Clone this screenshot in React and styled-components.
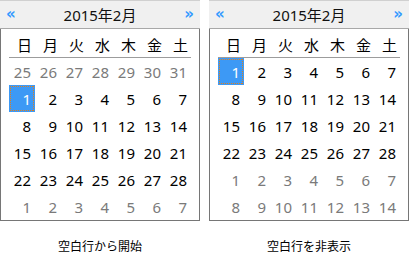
import React from "react";
import styled, { createGlobalStyle } from "styled-components";

const Global = createGlobalStyle`
  html, body { margin: 0; padding: 0; background: #fff; }
  body { font-family: "Noto Sans", "Noto Sans CJK JP", sans-serif; }
`;

const Page = styled.div`
  display: flex;
  gap: 9px;
  align-items: flex-start;
`;

const Column = styled.div`
  display: flex;
  flex-direction: column;
  align-items: center;
  width: 200px;
`;

const Frame = styled.div`
  width: 200px;
  box-sizing: border-box;
  border: 1px solid #767676;
  border-top: none;
  background: #fff;
`;

const Header = styled.div`
  height: 29px;
  display: flex;
  align-items: center;
  justify-content: space-between;
  background: #f0f0f0;
  border-bottom: 1px solid #a8a8a8;
  border-top: 1px solid #d0d0d0;
  margin: 0 -1px;
  padding: 0 6px;
  box-sizing: border-box;
`;

const Nav = styled.span`
  color: #3399ff;
  font-size: 15px;
  font-family: "DejaVu Sans", sans-serif;
  font-weight: bold;
  line-height: 1;
`;

const Title = styled.span`
  font-size: 15px;
  color: #111;
  font-family: "Noto Sans", "Noto Sans CJK JP", sans-serif;
`;

const Body = styled.div`
  padding: 0 8px;
`;

const Grid = styled.div`
  display: grid;
  grid-template-columns: repeat(7, 26px);
  grid-auto-rows: 27px;
`;

const WeekRow = styled.div`
  display: grid;
  grid-template-columns: repeat(7, 26px);
  height: 28px;
  border-bottom: 1px solid #9c9c9c;
`;

const WeekCell = styled.div`
  display: flex;
  align-items: center;
  justify-content: flex-end;
  padding-right: 3px;
  padding-top: 2px;
  font-size: 15px;
  font-family: "Noto Sans CJK JP", sans-serif;
  color: #000;
`;

const dot = "#e0801c";

const Day = styled.div`
  position: relative;
  display: flex;
  align-items: center;
  justify-content: flex-end;
  padding-right: 4px;
  font-size: 15px;
  color: ${(p) => (p.$selected ? "#fff" : p.$muted ? "#7a7a7a" : "#000")};
  background: ${(p) => (p.$selected ? "#3d99f5" : "transparent")};

  &::after {
    content: "";
    display: ${(p) => (p.$selected ? "block" : "none")};
    position: absolute;
    inset: 1px;
    background:
      repeating-linear-gradient(90deg, ${dot} 0 1px, transparent 1px 2px) top left / 100% 1px no-repeat,
      repeating-linear-gradient(90deg, ${dot} 0 1px, transparent 1px 2px) bottom left / 100% 1px no-repeat,
      repeating-linear-gradient(180deg, ${dot} 0 1px, transparent 1px 2px) top left / 1px 100% no-repeat,
      repeating-linear-gradient(180deg, ${dot} 0 1px, transparent 1px 2px) top right / 1px 100% no-repeat;
  }
`;

const Caption = styled.div`
  margin-top: 16px;
  font-size: 12px;
  font-family: "Noto Sans CJK JP", sans-serif;
  color: #000;
`;

const weekdays = ["日", "月", "火", "水", "木", "金", "土"];

function Calendar({ days, caption }) {
  return (
    <Column>
      <Frame>
        <Header>
          <Nav>«</Nav>
          <Title>2015年2月</Title>
          <Nav>»</Nav>
        </Header>
        <Body>
          <WeekRow>
            {weekdays.map((w) => (
              <WeekCell key={w}>{w}</WeekCell>
            ))}
          </WeekRow>
          <Grid>
            {days.map((d, i) => (
              <Day key={i} $muted={d.muted} $selected={d.selected}>
                {d.n}
              </Day>
            ))}
          </Grid>
        </Body>
      </Frame>
      <Caption>{caption}</Caption>
    </Column>
  );
}

const range = (a, b, muted) => {
  const r = [];
  for (let i = a; i <= b; i++) r.push({ n: i, muted });
  return r;
};

const feb = () => {
  const r = range(1, 28, false);
  r[0].selected = true;
  return r;
};

const leftDays = [...range(25, 31, true), ...feb(), ...range(1, 7, true)];
const rightDays = [...feb(), ...range(1, 14, true)];

export default function App() {
  return (
    <>
      <Global />
      <Page>
        <Calendar days={leftDays} caption="空白行から開始" />
        <Calendar days={rightDays} caption="空白行を非表示" />
      </Page>
    </>
  );
}
